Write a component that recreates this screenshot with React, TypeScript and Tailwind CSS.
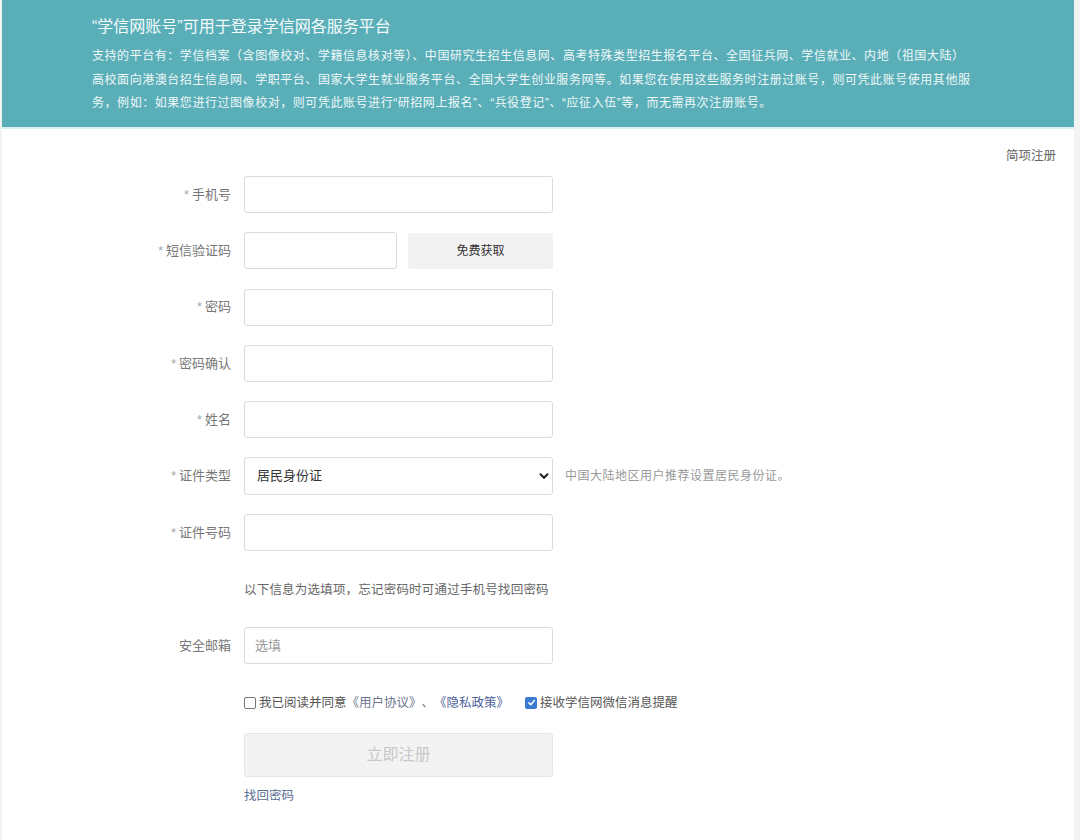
import React from 'react'

const font = { fontFamily: '"Liberation Sans", "Noto Sans CJK SC", sans-serif' }

function Label({ text, required = true }: { text: string; required?: boolean }) {
  return (
    <div className="w-[92px] shrink-0 text-right text-[13px] text-[#777] whitespace-nowrap">
      {required && <span className="text-[#aaa] mr-[3px]">*</span>}
      {text}
    </div>
  )
}

function Row({ label, required = true, children }: { label: string; required?: boolean; children: React.ReactNode }) {
  return (
    <div className="flex items-center h-[37px]">
      <Label text={label} required={required} />
      <div className="ml-[13px] flex items-center">{children}</div>
    </div>
  )
}

function Input({ w = 309, placeholder }: { w?: number; placeholder?: string }) {
  return (
    <div
      className="h-[37px] border border-[#dcdcdc] rounded-[3px] bg-white flex items-center px-[10px] text-[13px] text-[#999]"
      style={{ width: w }}
    >
      {placeholder}
    </div>
  )
}

export default function App() {
  return (
    <div className="w-[1080px] h-[840px] bg-[#f4f4f4] overflow-hidden" style={font}>
      <div className="ml-[2px] mr-[6px] h-full bg-white">
        {/* banner */}
        <div className="h-[129px] bg-[#5aaeb8] border-b-2 border-[#d9f1f3] pl-[90px] pt-[14px] text-white">
          <div className="text-[16px] leading-[26px] text-[#f4fbfc]">“学信网账号”可用于登录学信网各服务平台</div>
          <div className="mt-[5px] text-[12px] leading-[23.5px] text-[#eef8f9] whitespace-nowrap tracking-[0.55px]">
            支持的平台有：学信档案（含图像校对、学籍信息核对等）、中国研究生招生信息网、高考特殊类型招生报名平台、全国征兵网、学信就业、内地（祖国大陆）<br />
            高校面向港澳台招生信息网、学职平台、国家大学生就业服务平台、全国大学生创业服务网等。如果您在使用这些服务时注册过账号，则可凭此账号使用其他服<br />
            务，例如：如果您进行过图像校对，则可凭此账号进行“研招网上报名”、“兵役登记”、“应征入伍”等，而无需再次注册账号。
          </div>
        </div>

        <div className="flex justify-end pr-[18px] pt-[19px] text-[12.5px] text-[#666] leading-[16px]">简项注册</div>

        <div className="pl-[137px] pt-[12px] flex flex-col gap-[19.33px]">
          <Row label="手机号"><Input /></Row>
          <Row label="短信验证码">
            <Input w={153} />
            <div className="ml-[11px] w-[145px] h-[36px] bg-[#f2f2f2] rounded-[2px] flex items-center justify-center text-[12px] text-[#333]">
              免费获取
            </div>
          </Row>
          <Row label="密码"><Input /></Row>
          <Row label="密码确认"><Input /></Row>
          <Row label="姓名"><Input /></Row>
          <Row label="证件类型">
            <div className="w-[309px] h-[38px] border border-[#dcdcdc] rounded-[3px] bg-white flex items-center justify-between pl-[12px] pr-[2px] text-[13px] text-[#333]">
              <span>居民身份证</span>
              <svg width="12" height="12" viewBox="0 0 12 12">
                <path d="M2.5 4.2 L6 7.8 L9.5 4.2" fill="none" stroke="#222" strokeWidth="2" strokeLinecap="round" strokeLinejoin="round" />
              </svg>
            </div>
            <span className="ml-[12px] text-[12px] tracking-[0.5px] text-[#999]">中国大陆地区用户推荐设置居民身份证。</span>
          </Row>
          <Row label="证件号码"><Input /></Row>
        </div>

        <div className="pl-[242px] mt-[31px] text-[12.5px] tracking-[0.2px] text-[#666] leading-[16px]">以下信息为选填项，忘记密码时可通过手机号找回密码</div>

        <div className="pl-[137px] mt-[29px]">
          <Row label="安全邮箱" required={false}><Input placeholder="选填" /></Row>
        </div>

        <div className="pl-[242px] mt-[31px] flex items-center text-[12.5px] leading-[16px]">
          <span className="w-[12px] h-[12px] border border-[#777] rounded-[2px] bg-white" />
          <span className="ml-[3px] text-[#555]">我已阅读并同意</span>
          <span className="text-[#6c7590]">《用户协议》</span>
          <span className="text-[#777]">、</span>
          <span className="text-[#4f5f9c]">《隐私政策》</span>
          <span className="ml-[16px] w-[12px] h-[12px] rounded-[2px] bg-[#3b7bd4] flex items-center justify-center">
            <svg width="9" height="9" viewBox="0 0 10 10">
              <path d="M2 5.2 L4.2 7.4 L8.2 2.8" fill="none" stroke="white" strokeWidth="1.6" strokeLinecap="round" strokeLinejoin="round" />
            </svg>
          </span>
          <span className="ml-[3px] text-[#555]">接收学信网微信消息提醒</span>
        </div>

        <div className="ml-[242px] mt-[22px] w-[309px] h-[44px] bg-[#f3f3f3] border border-[#e6e6e6] rounded-[3px] flex items-center justify-center text-[16px] text-[#c8c8c8]">
          立即注册
        </div>

        <div className="pl-[242px] mt-[11px] text-[12.5px] text-[#5a6d94] leading-[16px]">找回密码</div>
      </div>
    </div>
  )
}
